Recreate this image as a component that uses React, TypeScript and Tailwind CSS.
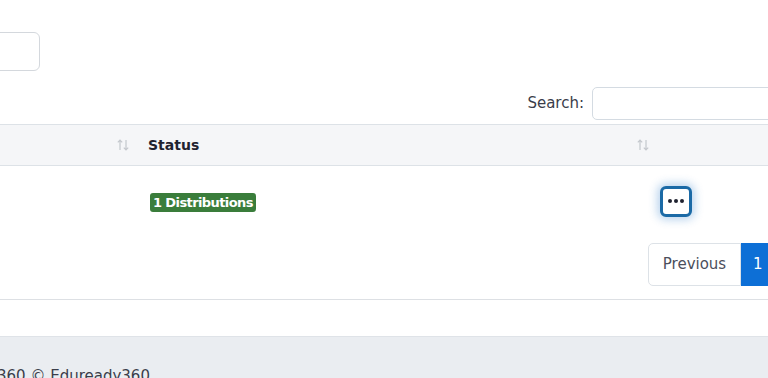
import React from "react";

function SortIcon() {
  return (
    <svg width="14" height="14" viewBox="0 0 14 14" fill="none" stroke="#c4c8cd" strokeWidth="1.2">
      <path d="M4 12V2M1.8 4.3L4 2l2.2 2.3" />
      <path d="M10 2v10M7.8 9.7L10 12l2.2-2.3" />
    </svg>
  );
}

export default function App() {
  return (
    <div
      className="w-[768px] h-[378px] overflow-hidden bg-white relative"
      style={{ fontFamily: '"DejaVu Sans", "Liberation Sans", sans-serif' }}
    >
      <div className="h-[32px]" />
      <div className="ml-[-21px] w-[61px] h-[39px] border border-[#d4d8dd] rounded-[6px]" />
      <div className="flex items-center justify-end mt-[16px] mr-[-60px] h-[33px]">
        <span className="text-[15px] text-[#3a3d4a] mr-[8px]">Search:</span>
        <div className="w-[236px] h-[33px] border border-[#d4dbe2] rounded-[5px]" />
      </div>
      <div className="mt-[4px] h-[42px] bg-[#f5f6f8] border-y border-[#dde2e7] flex items-center">
        <div className="w-[138px] flex justify-end pr-[8px]">
          <SortIcon />
        </div>
        <div className="w-[517px] flex items-center justify-between pl-[10px] pr-[5px]">
          <span className="text-[14px] font-semibold text-[#1f2230]">Status</span>
          <SortIcon />
        </div>
      </div>
      <div className="h-[70px] flex items-center">
        <div className="w-[138px]" />
        <div className="w-[522px] pl-[12px] pt-[2px]">
          <span className="inline-flex items-center h-[19px] px-[3px] rounded-[3px] bg-[#3a7d3b] text-white text-[13px] font-bold tracking-[-0.6px]">
            1 Distributions
          </span>
        </div>
        <div className="w-[108px] flex">
          <div className="w-[32px] h-[31px] rounded-[6px] border-[3px] border-[#1b6aa6] bg-white flex items-center justify-center gap-[2px] shadow-[0_0_8px_3px_rgba(40,120,200,0.3)]">
            <span className="w-[4px] h-[4px] rounded-full bg-[#1f2230]" />
            <span className="w-[4px] h-[4px] rounded-full bg-[#1f2230]" />
            <span className="w-[4px] h-[4px] rounded-full bg-[#1f2230]" />
          </div>
        </div>
      </div>
      <div className="flex justify-end mt-[7px] mr-[-30px] h-[43px]">
        <div className="w-[93px] h-[43px] border border-[#dde2e7] rounded-l-[5px] flex items-center justify-center text-[15px] text-[#4b4f5c]">
          Previous
        </div>
        <div className="w-[57px] h-[43px] bg-[#0d6fd6] text-white text-[15px] flex items-center pl-[12px]">
          1
        </div>
      </div>
      <div className="mt-[13px] border-t border-[#dde0e4]" />
      <div className="mt-[36px] h-[50px] bg-[#eaedf1] border-t border-[#dfe3e8]">
        <div className="ml-[-3px] pt-[28px] text-[15px] text-[#3a3d4a] whitespace-nowrap">
          360 © Eduready360
        </div>
      </div>
    </div>
  );
}
